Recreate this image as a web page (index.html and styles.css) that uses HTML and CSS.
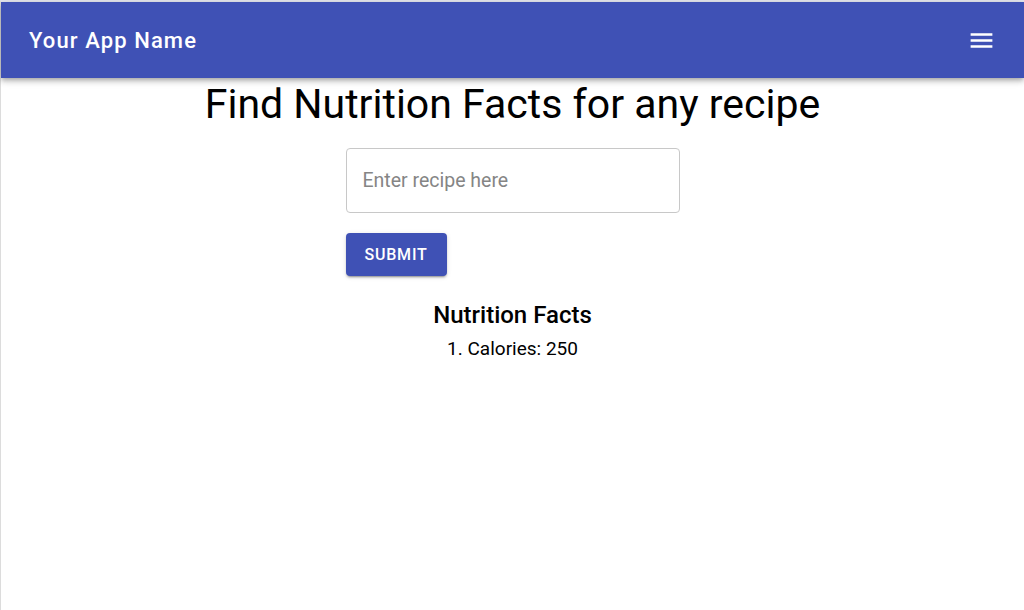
FILE: index.html
```html
<!DOCTYPE html>
<html lang="en">
<head>
    <meta charset="UTF-8">
    <meta name="viewport" content="width=device-width, initial-scale=1.0">
    <title>Nutrition Facts</title>
    <link rel="stylesheet" href="styles.css">
</head>
<body>
    <div class="frame">
        <header class="app-bar">
            <span class="app-title">Your App Name</span>
            <button class="menu-btn" aria-label="menu">
                <svg width="29" height="29" viewBox="0 0 24 24"><path d="M3 18h18v-2H3v2zm0-5h18v-2H3v2zm0-7v2h18V6H3z" fill="#fff"/></svg>
            </button>
        </header>
        <main class="content">
            <h1>Find Nutrition Facts for any recipe</h1>
            <form class="recipe-form">
                <input type="text" placeholder="Enter recipe here">
                <button type="submit" class="submit-btn">Submit</button>
            </form>
            <section class="facts">
                <h2>Nutrition Facts</h2>
                <ol>
                    <li>Calories: 250</li>
                </ol>
            </section>
        </main>
    </div>
</body>
</html>
```

FILE: styles.css
```css
html, body {
    margin: 0;
    height: 100%;
}
body {
    font-family: Roboto, 'Noto Sans', sans-serif;
    background-color: #ffffff;
}
.frame {
    height: 100%;
    box-sizing: border-box;
    border-top: 2px solid #e4e6ee;
    border-left: 1px solid #dcdcdc;
}
.app-bar {
    height: 76px;
    background-color: #3f51b5;
    display: flex;
    align-items: center;
    justify-content: space-between;
    padding: 0 20px 0 28px;
    box-shadow: 0 2px 4px -1px rgba(0, 0, 0, 0.2), 0 4px 5px 0 rgba(0, 0, 0, 0.14), 0 1px 10px 0 rgba(0, 0, 0, 0.12);
    position: relative;
}
.app-title {
    color: #fff;
    font-size: 22px;
    font-weight: 500;
    letter-spacing: 1.1px;
}
.menu-btn {
    background: none;
    border: none;
    padding: 8px;
    display: flex;
}
.content {
    display: flex;
    flex-direction: column;
    align-items: center;
}
h1 {
    margin: 2px 0 0;
    font-size: 41px;
    font-weight: 400;
    color: #000;
    line-height: 48px;
}
.recipe-form {
    width: 334px;
    margin-top: 20px;
    display: flex;
    flex-direction: column;
    align-items: flex-start;
}
.recipe-form input {
    width: 100%;
    height: 65px;
    box-sizing: border-box;
    border: 1px solid #c8c8c8;
    border-radius: 4px;
    padding: 0 16px;
    font-family: inherit;
    font-size: 19.5px;
}
.recipe-form input::placeholder {
    color: #858585;
}
.submit-btn {
    margin-top: 20px;
    width: 101px;
    height: 43px;
    background-color: #3f51b5;
    color: #fff;
    border: none;
    border-radius: 4px;
    font-family: inherit;
    font-size: 16px;
    font-weight: 500;
    letter-spacing: 0.8px;
    text-transform: uppercase;
    box-shadow: 0 3px 1px -2px rgba(0, 0, 0, 0.2), 0 2px 2px 0 rgba(0, 0, 0, 0.14), 0 1px 5px 0 rgba(0, 0, 0, 0.12);
}
.facts {
    margin-top: 24px;
    text-align: center;
}
.facts h2 {
    margin: 0;
    font-size: 24px;
    font-weight: 500;
    line-height: 30px;
}
.facts ol {
    margin: 7px 0 0;
    padding: 0;
    list-style-position: inside;
    font-size: 19px;
    line-height: 24px;
}
```
